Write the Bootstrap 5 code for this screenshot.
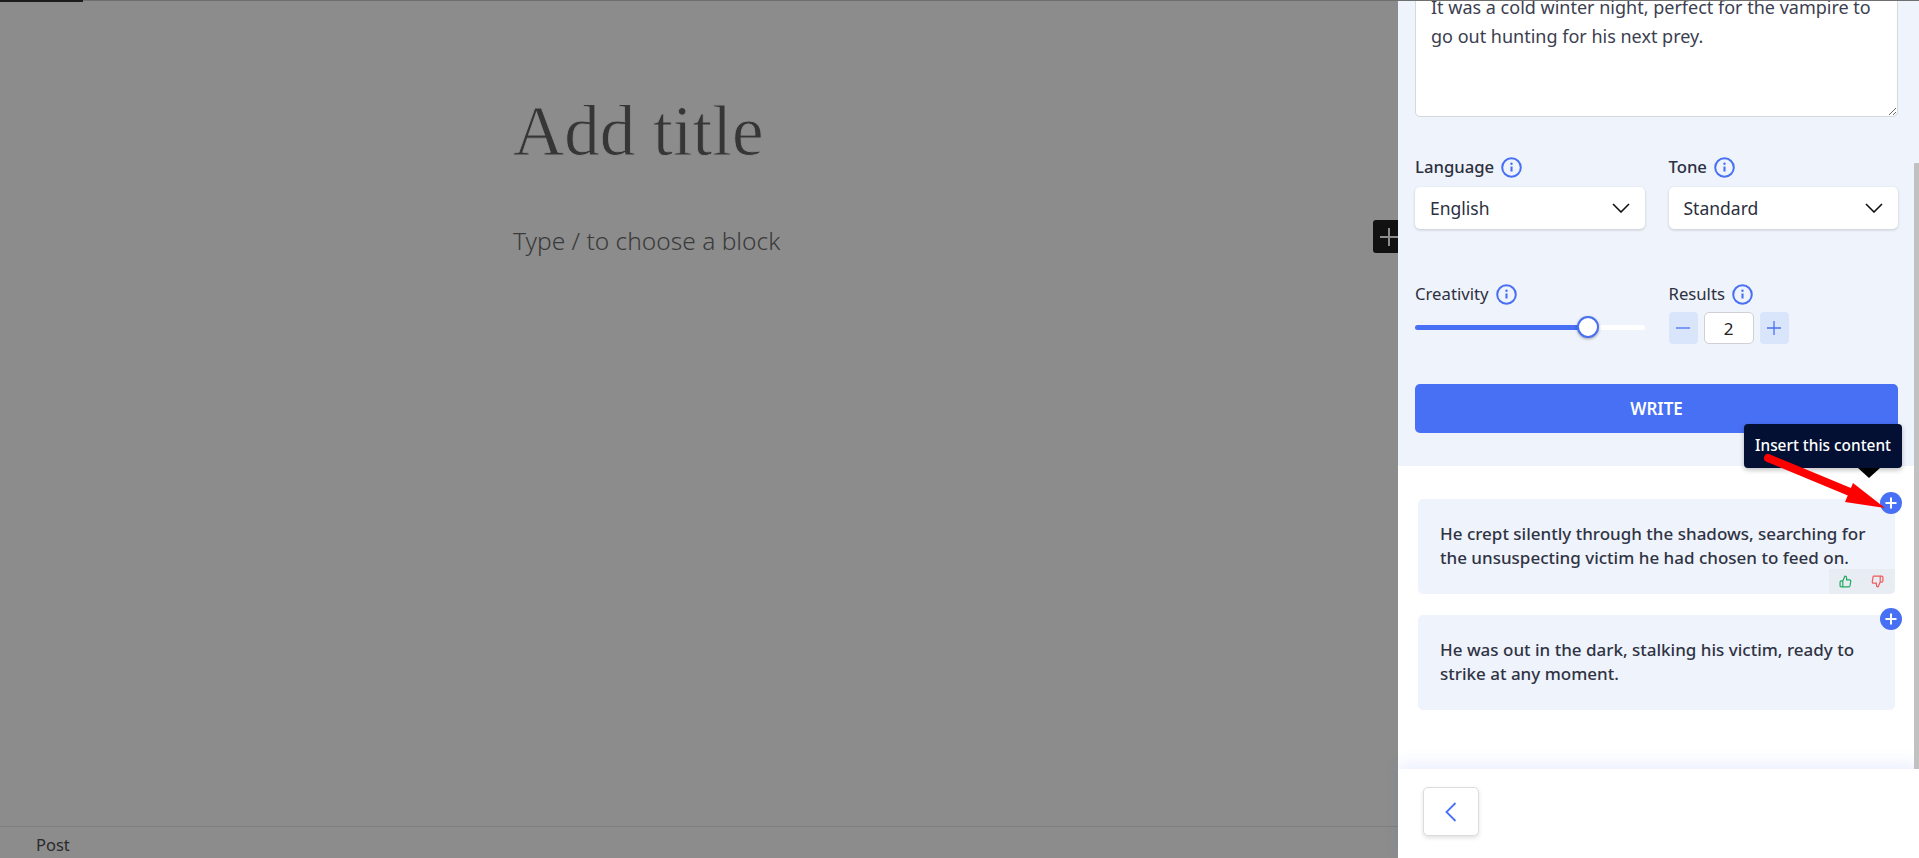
<!DOCTYPE html>
<html lang="en">
<head>
  <meta charset="UTF-8">
  <title>Add title - Post</title>
  <link href="https://cdn.jsdelivr.net/npm/bootstrap@5.3.0/dist/css/bootstrap.min.css" rel="stylesheet">
  <style>
    html, body {
      height: 100%;
      overflow: hidden;
      background-color: #8c8c8c;
      font-family: "Noto Sans", sans-serif;
    }

    .top-strip { height: 1px; background-color: #6f6f6f; position: relative; }
    .top-strip-dark { width: 83px; height: 2px; background-color: #1c1c1c; }
    .page-body { height: 857px; }

    /* editor side */
    .editor-side { flex: 1 1 0; min-width: 0; position: relative; color: #3a3a3a; }
    .editor-main { padding: 88px 0 0 513px; }
    .post-title { font-family: "Liberation Serif", serif; font-size: 71px; line-height: 84px; color: #363636; -webkit-text-stroke: .8px #8c8c8c; margin-bottom: 52px; }
    .post-placeholder { font-size: 24.5px; line-height: 32px; font-weight: 300; color: #3a3a3a; }
    .editor-foot { height: 32px; border-top: 1px solid #7f7f7f; padding: 7px 0 0 36px; font-size: 16.5px; line-height: 22px; color: #2b2b2b; }
    .add-block { position: absolute; top: 219px; right: 0; width: 25px; height: 33px; padding-left: 7px; background-color: #111; border-radius: 3px 0 0 3px; }

    /* right panel */
    .side-panel { width: 521px; background-color: #fff; position: relative; }
    .panel-scroll { flex: 1 1 0; min-height: 0; overflow: hidden; }
    .scroll-thumb { position: absolute; top: 162px; right: 0; width: 5px; height: 606px; background-color: #c1c1c1; border-radius: 1px 0 0 0; z-index: 2; }
    .form-zone { background-color: #eff3fb; padding: 187px 21px 33px 17px; }
    .prompt-box { height: 136px; font-size: 18px; line-height: 29px; color: #3b4050; padding: 11px 15px; border: 1px solid #d6d8dd; border-radius: 5px; }
    .select-row { margin-top: 38px; }
    .range-row { margin-top: 53px; }
    .field-label { font-size: 16.7px; line-height: 24px; color: #2c3040; margin-bottom: 8px; gap: 7px; }
    .field-label.strong-label { font-weight: 500; }
    .range-row .field-label { margin-bottom: 6px; }
    .field-select { height: 42px; font-size: 17.5px; color: #2c3040; padding: 0 36px 0 15px; border: 0; border-radius: 5px; box-shadow: 0 1px 3px rgba(0,0,0,.18);
      background-image: url("data:image/svg+xml,%3csvg xmlns='http://www.w3.org/2000/svg' viewBox='0 0 18 10'%3e%3cpath fill='none' stroke='%23111' stroke-width='1.6' d='M1 1l8 8 8-8'/%3e%3c/svg%3e");
      background-size: 18px 10px; background-position: right 15px center; }
    .creativity-range { height: 30px; padding: 0; display: block; }
    .creativity-range::-webkit-slider-runnable-track { height: 5px; border-radius: 3px; background: linear-gradient(90deg, #4870f4 var(--fill), #fff var(--fill)); }
    .creativity-range::-webkit-slider-thumb { width: 22px; height: 22px; margin-top: -8.5px; background-color: #fff; border: 2px solid #4870f4; border-radius: 50%; box-shadow: 0 1px 3px rgba(0,0,0,.35); }
    .step-btn { width: 29px; height: 32px; padding: 0; background-color: #d9e5fb; border: 0; border-radius: 4px; }
    .step-value { width: 50px; height: 32px; padding: 0; text-align: center; font-size: 17px; color: #222; border: 1px solid #cfd1d6; border-radius: 5px; }
    .step-row { gap: 6px; }
    .write-btn { height: 49px; margin-top: 40px; font-size: 17px; font-weight: 600; color: #fff; background-color: #4870f4; border: 0; border-radius: 5px; }
    .write-btn:hover { background-color: #4870f4; color: #fff; }

    .result-zone { padding: 33px 24px 60px 20px; background-color: #fff; }
    .result-card { position: relative; height: 95px; background-color: #eff3fb; border-radius: 5px; padding: 23px 22px 0 22px; font-size: 17px; line-height: 24px; font-weight: 500; color: #2f3344; margin-bottom: 21px; }
    .insert-btn { position: absolute; top: -7px; right: -7px; width: 22px; height: 22px; padding: 0; border: 0; border-radius: 50%; background-color: #4870f4; display: flex; align-items: center; justify-content: center; }
    .vote-box { position: absolute; right: 0; bottom: 0; width: 66px; height: 25px; background-color: #e8ecf3; border-radius: 0 0 5px 0; padding: 0 11px 0 10px; }
    .insert-tip { position: absolute; top: -75px; right: -7px; width: 158px; height: 44px; background-color: #031033; color: #fff; border-radius: 4px; font-size: 15.4px; font-weight: 500; line-height: 44px; text-align: center; box-shadow: 0 2px 5px rgba(0,0,0,.25); white-space: nowrap; }
    .insert-tip::after { content: ""; position: absolute; left: 114px; top: 44px; border-style: solid; border-width: 10px 11px 0; border-color: #000 transparent transparent; }

    .panel-foot { height: 89px; padding: 18px 0 0 25px; position: relative; z-index: 1; background-color: #fff; box-shadow: 0 -6px 14px rgba(72,112,244,.1); }
    .back-btn { width: 56px; height: 49px; padding: 0; background-color: #fff; border: 1px solid #dcdcdc; border-radius: 5px; box-shadow: 0 2px 4px rgba(0,0,0,.12); }

    .arrow-mark { position: absolute; left: 0; top: 0; width: 1919px; height: 858px; pointer-events: none; z-index: 5; }
  </style>
</head>
<body>

  <div class="top-strip"><div class="top-strip-dark"></div></div>

  <div class="page-body d-flex">
    <!-- Editor behind the overlay -->
    <div class="editor-side d-flex flex-column">
      <div class="editor-main flex-grow-1">
        <div class="post-title">Add title</div>
        <div class="post-placeholder">Type / to choose a block</div>
      </div>
      <div class="editor-foot">Post</div>
      <div class="add-block d-flex align-items-center">
        <svg width="18" height="18" viewBox="0 0 18 18"><path d="M9 0v18M0 9h18" stroke="#8c8c8c" stroke-width="2" fill="none"/></svg>
      </div>
    </div>

    <!-- Writer panel -->
    <div class="side-panel d-flex flex-column">
      <div class="panel-scroll" id="panel-scroll">
        <div class="form-zone">
          <textarea class="form-control prompt-box shadow-none">It was a cold winter night, perfect for the vampire to go out hunting for his next prey.</textarea>

          <div class="row gx-4 select-row">
            <div class="col-6">
              <div class="field-label strong-label d-flex align-items-center">Language <svg width="21" height="21" viewBox="0 0 21 21"><use href="#info-icon"/></svg></div>
              <select class="form-select field-select"><option>English</option></select>
            </div>
            <div class="col-6">
              <div class="field-label strong-label d-flex align-items-center">Tone <svg width="21" height="21" viewBox="0 0 21 21"><use href="#info-icon"/></svg></div>
              <select class="form-select field-select"><option>Standard</option></select>
            </div>
          </div>

          <div class="row gx-4 range-row">
            <div class="col-6">
              <div class="field-label d-flex align-items-center">Creativity <svg width="21" height="21" viewBox="0 0 21 21"><use href="#info-icon"/></svg></div>
              <input type="range" class="form-range creativity-range" min="0" max="100" value="78" style="--fill: 78%">
            </div>
            <div class="col-6">
              <div class="field-label d-flex align-items-center">Results <svg width="21" height="21" viewBox="0 0 21 21"><use href="#info-icon"/></svg></div>
              <div class="d-flex align-items-center step-row">
                <button class="btn step-btn d-flex align-items-center justify-content-center"><svg width="14" height="14" viewBox="0 0 14 14"><path d="M0 7h14" stroke="#4870f4" stroke-width="1.3"/></svg></button>
                <input type="text" class="form-control step-value shadow-none" value="2">
                <button class="btn step-btn d-flex align-items-center justify-content-center"><svg width="14" height="14" viewBox="0 0 14 14"><path d="M0 7h14M7 0v14" stroke="#4870f4" stroke-width="1.3"/></svg></button>
              </div>
            </div>
          </div>

          <button class="btn write-btn w-100">WRITE</button>
        </div>

        <div class="result-zone">
          <div class="result-card">
            He crept silently through the shadows, searching for the unsuspecting victim he had chosen to feed on.
            <div class="insert-tip">Insert this content</div>
            <button class="insert-btn"><svg width="12" height="12" viewBox="0 0 12 12"><path d="M6 .5v11M.5 6h11" stroke="#fff" stroke-width="2"/></svg></button>
            <div class="vote-box d-flex align-items-center justify-content-between">
              <svg width="13" height="13" viewBox="0 0 24 24" fill="none" stroke="#1eab5f" stroke-width="2.2" stroke-linejoin="round"><path d="M14 9V5a3 3 0 0 0-3-3l-4 9v11h11.28a2 2 0 0 0 2-1.7l1.38-9a2 2 0 0 0-2-2.3zM7 22H4a2 2 0 0 1-2-2v-7a2 2 0 0 1 2-2h3"/></svg>
              <svg width="13" height="13" viewBox="0 0 24 24" fill="none" stroke="#ef5a5a" stroke-width="2.2" stroke-linejoin="round"><path d="M10 15v4a3 3 0 0 0 3 3l4-9V2H5.72a2 2 0 0 0-2 1.7l-1.38 9a2 2 0 0 0 2 2.3zm7-13h2.67A2.31 2.31 0 0 1 22 4v7a2.31 2.31 0 0 1-2.33 2H17"/></svg>
            </div>
          </div>
          <div class="result-card mb-0">
            He was out in the dark, stalking his victim, ready to strike at any moment.
            <button class="insert-btn"><svg width="12" height="12" viewBox="0 0 12 12"><path d="M6 .5v11M.5 6h11" stroke="#fff" stroke-width="2"/></svg></button>
          </div>
        </div>
      </div>

      <div class="scroll-thumb"></div>

      <div class="panel-foot">
        <button class="btn back-btn d-flex align-items-center justify-content-center">
          <svg width="12" height="20" viewBox="0 0 12 20"><path d="M10.5 1 1.5 10l9 9" fill="none" stroke="#4870f4" stroke-width="1.8"/></svg>
        </button>
      </div>
    </div>
  </div>

  <!-- shared info icon -->
  <svg width="0" height="0" class="d-none">
    <symbol id="info-icon" viewBox="0 0 21 21">
      <circle cx="10.5" cy="10.5" r="9.3" fill="none" stroke="#4870f4" stroke-width="2"/>
      <path d="M10.5 9.5v5" stroke="#4870f4" stroke-width="2.1"/>
      <circle cx="10.5" cy="6.7" r="1.2" fill="#4870f4"/>
    </symbol>
  </svg>

  <!-- red annotation arrow -->
  <svg class="arrow-mark" viewBox="0 0 1919 858">
    <path d="M1768 458 1862 497" stroke="#f00" stroke-width="8" stroke-linecap="round" fill="none"/>
    <polygon points="1853,483 1885,508 1845,502" fill="#f00"/>
  </svg>

<script>
document.addEventListener('DOMContentLoaded', () => {
  // panel is scrolled down in the screenshot
  document.getElementById('panel-scroll').scrollTop = 207;
});
</script>

</body>
</html>
